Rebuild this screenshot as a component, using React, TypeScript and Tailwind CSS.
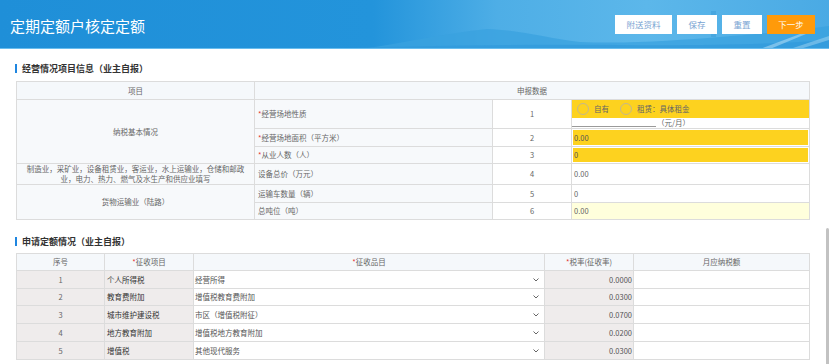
import React from "react";

const Req = () => <span className="text-[#e3322f]">*</span>;

function Radio({ label }: { label: string }) {
  return (
    <span className="flex items-center">
      <span className="w-[12px] h-[12px] rounded-full border border-[#c4b78e] box-border" />
      <span className="ml-[5px]">{label}</span>
    </span>
  );
}

function SectionTitle({ children }: { children: React.ReactNode }) {
  return (
    <div className="flex items-center h-[12px] pl-[15px]">
      <span className="w-[2px] h-[9px] bg-[#1f86e0]" />
      <span className="ml-[5px] text-[9px] font-bold text-[#333] leading-none">{children}</span>
    </div>
  );
}

function Header() {
  return (
    <div className="relative w-[829px] h-[49px] overflow-hidden">
      <svg className="absolute inset-0" width="829" height="49" viewBox="0 0 829 49">
        <defs>
          <linearGradient id="hg" x1="0" x2="1" y1="0" y2="0">
            <stop offset="0" stopColor="#1f8fd8" />
            <stop offset="0.45" stopColor="#2394db" />
            <stop offset="0.6" stopColor="#4eaee6" />
            <stop offset="0.78" stopColor="#5cb7ea" />
            <stop offset="1" stopColor="#4aaae4" />
          </linearGradient>
        </defs>
        <rect width="829" height="49" fill="url(#hg)" />
        <path d="M360 49 C 400 44, 440 34, 487 29 C 520 30, 545 38, 580 42 C 630 44, 680 40, 720 37 C 760 34, 800 30, 829 26 L 829 49 Z" fill="#3aa1df" opacity="0.75" />
        <path d="M300 49 C 420 46, 520 44, 620 45 C 700 46, 780 44, 829 40 L 829 49 Z" fill="#2f98db" opacity="0.6" />
        <rect x="711" y="11" width="5" height="26" fill="#3c9cd9" opacity="0.55" />
        <path d="M760 49 L 800 34 L 806 34 L 770 49 Z" fill="#bfe4f7" opacity="0.5" />
        <path d="M790 49 L 829 36 L 829 40 L 800 49 Z" fill="#bfe4f7" opacity="0.4" />
        <rect y="48" width="829" height="1" fill="#69bdee" />
      </svg>
      <div className="relative flex items-center justify-between h-full pl-[10px] pr-[14px]">
        <span className="text-white text-[15px] leading-none pt-[2px]">定期定额户核定定额</span>
        <div className="flex items-center gap-[5px] text-[8.5px]">
          <button className="w-[57px] h-[19px] bg-white text-[#79a4d2]">附送资料</button>
          <button className="w-[40px] h-[19px] bg-white text-[#79a4d2]">保存</button>
          <button className="w-[40px] h-[19px] bg-white text-[#79a4d2]">重置</button>
          <button className="w-[48px] h-[19px] bg-[#ff9a0a] text-white">下一步</button>
        </div>
      </div>
    </div>
  );
}

const cell = "border border-[#dcdcdc] p-0 align-middle";
const hdr = "bg-[#f5f8fb]";
const lbl = "bg-[#f7f9fb]";

function Table1() {
  return (
    <table className="w-[793px] table-fixed border-collapse text-[7.5px] leading-none text-[#666]">
      <colgroup>
        <col className="w-[238px]" />
        <col className="w-[238px]" />
        <col className="w-[79px]" />
        <col className="w-[238px]" />
      </colgroup>
      <tbody>
        <tr className="h-[18px]">
          <td className={`${cell} ${hdr} text-center`}>项目</td>
          <td className={`${cell} ${hdr} text-center`} colSpan={3}>申报数据</td>
        </tr>
        <tr className="h-[29px]">
          <td className={`${cell} ${lbl} text-center`} rowSpan={3}>纳税基本情况</td>
          <td className={`${cell} ${lbl} pl-[3px]`}><Req />经营场地性质</td>
          <td className={`${cell} text-center bg-white`}>1</td>
          <td className={`${cell} bg-white`}>
            <div className="flex flex-col h-[28px]">
              <div className="h-[18px] bg-[#fdd21f] flex items-center pl-[5px]">
                <Radio label="自有" />
                <span className="ml-[11px]"><Radio label="租赁：具体租金" /></span>
              </div>
              <div className="flex-1 flex items-end">
                <span className="w-[84px] h-[1px] bg-[#9a9a9a] mb-[1px]" />
                <span className="ml-[1px] mb-[2px]">（元/月）</span>
              </div>
            </div>
          </td>
        </tr>
        <tr className="h-[18px]">
          <td className={`${cell} ${lbl} pl-[3px]`}><Req />经营场地面积（平方米）</td>
          <td className={`${cell} text-center bg-white`}>2</td>
          <td className={`${cell} bg-white p-[1px]`}>
            <div className="h-[15px] bg-[#fdd21f] flex items-center pl-[1px] text-[#555]">0.00</div>
          </td>
        </tr>
        <tr className="h-[17px]">
          <td className={`${cell} ${lbl} pl-[3px]`}><Req />从业人数（人）</td>
          <td className={`${cell} text-center bg-white`}>3</td>
          <td className={`${cell} bg-white p-[1px]`}>
            <div className="h-[14px] bg-[#fdd21f] flex items-center pl-[1px] text-[#555]">0</div>
          </td>
        </tr>
        <tr className="h-[21px]">
          <td className={`${cell} ${lbl} text-center`}>
            <div className="flex flex-col items-center gap-[1px]">
              <span className="leading-[8.5px]">制造业，采矿业，设备租赁业，客运业，水上运输业，仓储和邮政</span>
              <span className="leading-[8.5px]">业，电力、热力、燃气及水生产和供应业填写</span>
            </div>
          </td>
          <td className={`${cell} ${lbl} pl-[3px]`}>设备总价（万元）</td>
          <td className={`${cell} text-center bg-white`}>4</td>
          <td className={`${cell} bg-white pl-[2px]`}>0.00</td>
        </tr>
        <tr className="h-[18px]">
          <td className={`${cell} ${lbl} text-center`} rowSpan={2}>货物运输业（陆路）</td>
          <td className={`${cell} ${lbl} pl-[3px]`}>运输车数量（辆）</td>
          <td className={`${cell} text-center bg-white`}>5</td>
          <td className={`${cell} bg-white pl-[2px]`}>0</td>
        </tr>
        <tr className="h-[17px]">
          <td className={`${cell} ${lbl} pl-[3px]`}>总吨位（吨）</td>
          <td className={`${cell} text-center bg-white`}>6</td>
          <td className={`${cell} bg-[#ffffdc] pl-[2px]`}>0.00</td>
        </tr>
      </tbody>
    </table>
  );
}

const rows2 = [
  ["1", "个人所得税", "经营所得", "0.0000"],
  ["2", "教育费附加", "增值税教育费附加", "0.0300"],
  ["3", "城市维护建设税", "市区（增值税附征）", "0.0700"],
  ["4", "地方教育附加", "增值税地方教育附加", "0.0200"],
  ["5", "增值税", "其他现代服务", "0.0300"],
];

function Chevron() {
  return (
    <svg width="6" height="4" viewBox="0 0 6 4" className="shrink-0">
      <path d="M0.5 0.5 L3 3 L5.5 0.5" fill="none" stroke="#666" strokeWidth="1" />
    </svg>
  );
}

function Table2() {
  const gray = "bg-[#efecec]";
  return (
    <table className="w-[793px] table-fixed border-collapse text-[7.5px] leading-none text-[#666]">
      <colgroup>
        <col className="w-[88px]" />
        <col className="w-[89px]" />
        <col className="w-[351px]" />
        <col className="w-[89px]" />
        <col className="w-[176px]" />
      </colgroup>
      <tbody>
        <tr className="h-[17px]">
          <td className={`${cell} ${hdr} text-center`}>序号</td>
          <td className={`${cell} ${hdr} text-center`}><Req />征收项目</td>
          <td className={`${cell} ${hdr} text-center`}><Req />征收品目</td>
          <td className={`${cell} ${hdr} text-center`}><Req />税率(征收率)</td>
          <td className={`${cell} ${hdr} text-center`}>月应纳税额</td>
        </tr>
        {rows2.map((r, i) => (
          <tr key={r[0]} className={i === 1 ? "h-[17px]" : "h-[18px]"}>
            <td className={`${cell} ${gray} text-center`}>{r[0]}</td>
            <td className={`${cell} ${gray} pl-[2px] text-[#333]`}>{r[1]}</td>
            <td className={`${cell} bg-white`}>
              <div className="flex items-center justify-between pl-[1px] pr-[5px]">
                <span className="text-[#555]">{r[2]}</span>
                <Chevron />
              </div>
            </td>
            <td className={`${cell} ${gray} text-right pr-[1px] text-[#555]`}>{r[3]}</td>
            <td className={`${cell} bg-white`}></td>
          </tr>
        ))}
      </tbody>
    </table>
  );
}

export default function App() {
  return (
    <div className="relative w-[831px] h-[364px] overflow-hidden bg-white font-['Noto_Sans_CJK_SC','Noto_Sans',sans-serif]">
      <Header />
      <div className="mt-[13px]">
        <SectionTitle>经营情况项目信息（业主自报）</SectionTitle>
      </div>
      <div className="mt-[7px] pl-[16px]">
        <Table1 />
      </div>
      <div className="mt-[15px]">
        <SectionTitle>申请定额情况（业主自报）</SectionTitle>
      </div>
      <div className="mt-[6px] pl-[16px]">
        <Table2 />
      </div>
      <div className="absolute right-[2px] top-[228px] w-[3px] h-[140px] rounded-full bg-[#c2c2c2]" />
    </div>
  );
}
